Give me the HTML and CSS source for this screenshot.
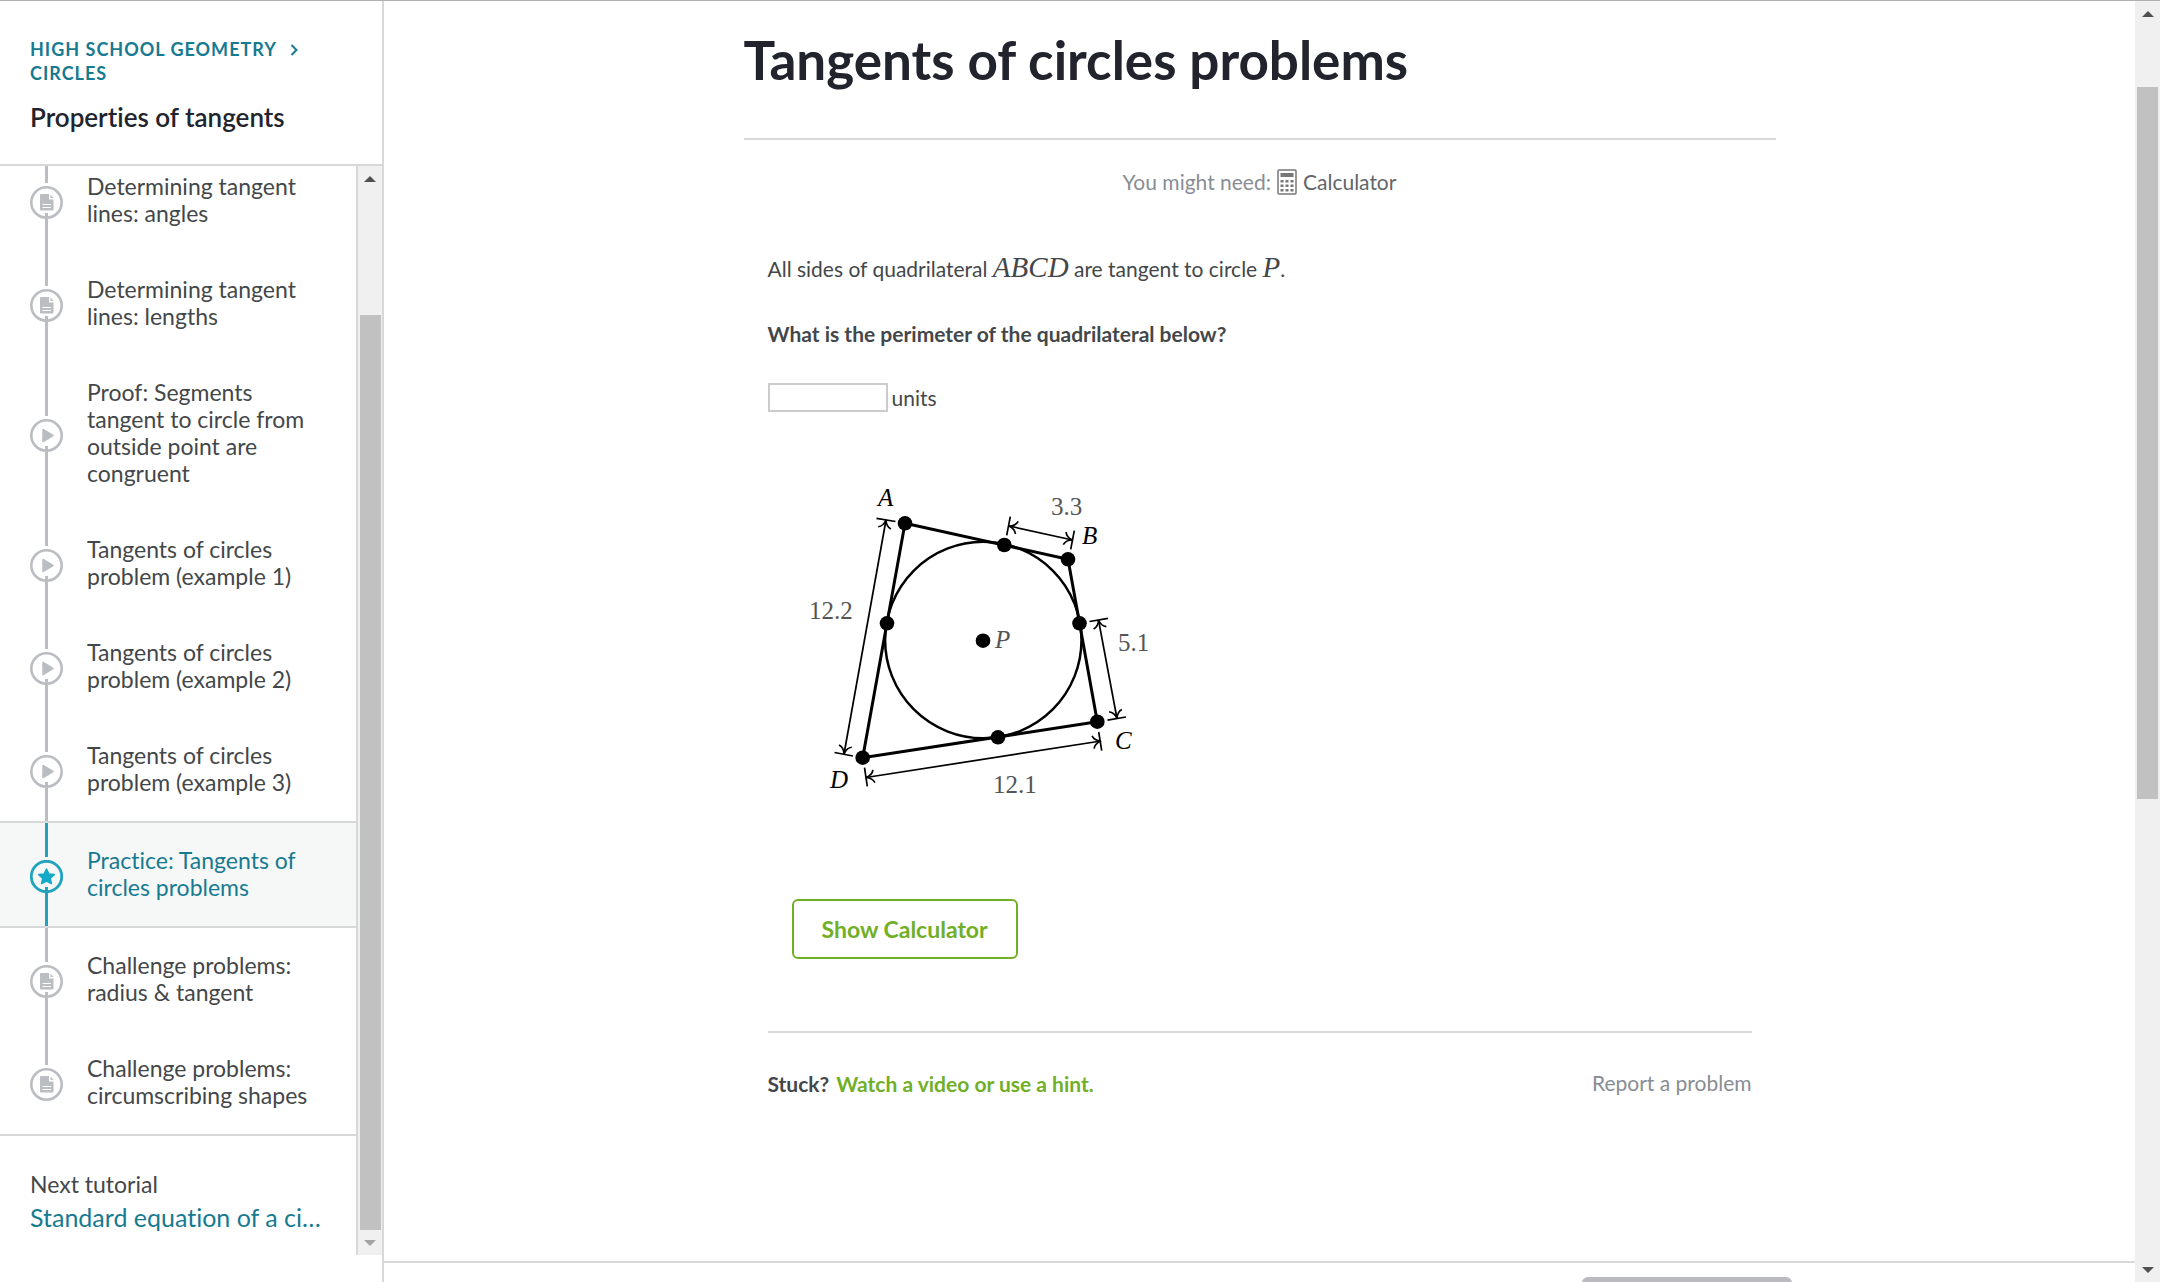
FILE: index.html
```html
<!DOCTYPE html>
<html lang="en">
<head>
    <meta charset="UTF-8">
    <meta name="viewport" content="width=device-width, initial-scale=1.0">
    <title>Tangents of circles problems</title>
    <link rel="stylesheet" href="styles.css">
</head>
<body>
    <!-- Shared icons -->
    <svg class="sprite" width="0" height="0" aria-hidden="true">
        <symbol id="icon-article" viewBox="0 0 33 33">
            <circle cx="16.500" cy="16.500" r="15.200" fill="none" stroke="currentColor" stroke-width="2.600"/>
            <path d="M11 8h8v5.500h4.500v10a1 1 0 0 1-1 1H11a1 1 0 0 1-1-1V9a1 1 0 0 1 1-1z" fill="currentColor"/>
            <path d="M20.500 8.500l3 3.500h-3z" fill="currentColor"/>
            <path d="M12.500 18.500h8.500M12.500 21.500h8.500" stroke="#fff" stroke-width="1.200"/>
            <path d="M15 27h3v6h-3z" fill="currentColor"/>
        </symbol>
        <symbol id="icon-article-end" viewBox="0 0 33 33">
            <circle cx="16.500" cy="16.500" r="15.200" fill="none" stroke="currentColor" stroke-width="2.600"/>
            <path d="M11 8h8v5.500h4.500v10a1 1 0 0 1-1 1H11a1 1 0 0 1-1-1V9a1 1 0 0 1 1-1z" fill="currentColor"/>
            <path d="M20.500 8.500l3 3.500h-3z" fill="currentColor"/>
            <path d="M12.500 18.500h8.500M12.500 21.500h8.500" stroke="#fff" stroke-width="1.200"/>
        </symbol>
        <symbol id="icon-video" viewBox="0 0 33 33">
            <circle cx="16.500" cy="16.500" r="15.200" fill="none" stroke="currentColor" stroke-width="2.600"/>
            <path d="M13 10.500l10 6-10 6z" fill="currentColor" stroke="currentColor" stroke-width="1.500" stroke-linejoin="round"/>
            <path d="M15 27h3v6h-3z" fill="currentColor"/>
        </symbol>
        <symbol id="icon-star" viewBox="0 0 33 33">
            <circle cx="16.500" cy="16.500" r="15.200" fill="none" stroke="currentColor" stroke-width="2.800"/>
            <path d="M16.500 9l2.400 5 5.400.600-4 3.700 1.100 5.400-4.900-2.700-4.900 2.700 1.100-5.400-4-3.700 5.400-.600z" fill="#14aac8" stroke="#14aac8" stroke-width="1.500" stroke-linejoin="round"/>
            <path d="M15 27h3v6h-3z" fill="currentColor"/>
        </symbol>
    </svg>

    <div class="page">
        <aside class="sidebar">
            <div class="sidebar-header">
                <nav class="breadcrumbs">
                    <a href="#">High school geometry</a>
                    <svg class="chevron" viewBox="0 0 8 12" aria-hidden="true"><path d="M1.500 1l5 5-5 5"/></svg>
                    <a href="#">Circles</a>
                </nav>
                <h2>Properties of tangents</h2>
            </div>

            <div class="sidebar-scroll">
                <div class="sidebar-content">
                    <ul class="lessons">
                        <li><a class="lesson" href="#">
                            <span class="marker"><svg><use href="#icon-article"/></svg></span>
                            <span class="lesson-title">Determining tangent lines: angles</span>
                        </a></li>
                        <li><a class="lesson" href="#">
                            <span class="marker"><svg><use href="#icon-article"/></svg></span>
                            <span class="lesson-title">Determining tangent lines: lengths</span>
                        </a></li>
                        <li><a class="lesson" href="#">
                            <span class="marker"><svg><use href="#icon-video"/></svg></span>
                            <span class="lesson-title">Proof: Segments tangent to circle from outside point are congruent</span>
                        </a></li>
                        <li><a class="lesson" href="#">
                            <span class="marker"><svg><use href="#icon-video"/></svg></span>
                            <span class="lesson-title">Tangents of circles problem (example 1)</span>
                        </a></li>
                        <li><a class="lesson" href="#">
                            <span class="marker"><svg><use href="#icon-video"/></svg></span>
                            <span class="lesson-title">Tangents of circles problem (example 2)</span>
                        </a></li>
                        <li><a class="lesson" href="#">
                            <span class="marker"><svg><use href="#icon-video"/></svg></span>
                            <span class="lesson-title">Tangents of circles problem (example 3)</span>
                        </a></li>
                        <li><a class="lesson active" href="#" aria-current="page">
                            <span class="marker"><svg><use href="#icon-star"/></svg></span>
                            <span class="lesson-title">Practice: Tangents of circles problems</span>
                        </a></li>
                        <li><a class="lesson" href="#">
                            <span class="marker"><svg><use href="#icon-article"/></svg></span>
                            <span class="lesson-title">Challenge problems: radius &amp; tangent</span>
                        </a></li>
                        <li><a class="lesson last" href="#">
                            <span class="marker"><svg><use href="#icon-article-end"/></svg></span>
                            <span class="lesson-title">Challenge problems: circumscribing shapes</span>
                        </a></li>
                    </ul>
                    <div class="next-tutorial">
                        <div>Next tutorial</div>
                        <a href="#">Standard equation of a ci…</a>
                    </div>
                </div>
                <div class="scrollbar sidebar-scrollbar" aria-hidden="true">
                    <span class="arrow arrow-up"></span>
                    <span class="track-before"></span>
                    <span class="thumb"></span>
                    <span class="arrow arrow-down muted"></span>
                </div>
            </div>
        </aside>

        <main class="main">
            <div class="exercise">
                <h1>Tangents of circles problems</h1>

                <div class="tools">
                    <span>You might need:</span>
                    <svg class="calculator-icon" viewBox="0 0 20 26" aria-hidden="true">
                        <rect x="1" y="1" width="18" height="24" rx="1" fill="none" stroke="currentColor" stroke-width="1.500"/>
                        <path d="M3.500 4h13v4h-13zM3.500 11h3v2.500h-3zM8.500 11h3v2.500h-3zM13.500 11h3v2.500h-3zM3.500 15.500h3V18h-3zM8.500 15.500h3V18h-3zM13.500 15.500h3V18h-3zM3.500 20h3v2.500h-3zM8.500 20h3v2.500h-3zM13.500 20h3v2.500h-3z" fill="currentColor"/>
                    </svg>
                    <span class="tool-name">Calculator</span>
                </div>

                <div class="problem">
                    <p>All sides of quadrilateral <i class="math">ABCD</i> are tangent to circle <i class="math">P</i>.</p>
                    <p class="question"><label for="answer">What is the perimeter of the quadrilateral below?</label></p>
                    <div class="answer">
                        <input type="text" id="answer">
                        <span>units</span>
                    </div>

                    <svg class="figure" viewBox="-12 0 412 340" role="img" aria-label="Quadrilateral ABCD tangent to circle P">
                        <defs>
                            <marker id="tip" viewBox="-9 -8 10 16" markerWidth="10" markerHeight="16" refX="0" refY="0" orient="auto-start-reverse" markerUnits="userSpaceOnUse">
                                <path d="M-8 -6.500C-7 -3-3-.700 0 0C-3 .700-7 3-8 6.500" fill="none" stroke="#000" stroke-width="1.700"/>
                            </marker>
                        </defs>
                        <circle class="shape" cx="203.300" cy="170" r="98.200"/>
                        <path class="side" d="M125 53.300L288 89.300L317.300 251.700L82.700 287.700Z"/>

                        <!-- Measured lengths -->
                        <g class="measure">
                            <path class="arrows" d="M106 50L64 284"/>
                            <path d="M96.500 48.300L115.500 51.500M54.500 282.500L73 286"/>
                            <path class="arrows" d="M229 56L292.500 70"/>
                            <path d="M230.300 46.700L226.700 65.300M294.300 60.700L290.700 79.300"/>
                            <path class="arrows" d="M318.500 150L337 248.500"/>
                            <path d="M309.500 151.500L328 148.300M327.500 250.200L346 247"/>
                            <path class="arrows" d="M86 307.500L321 271"/>
                            <path d="M84.500 297.700L87.300 316.300M318.700 262L321.700 280.700"/>
                        </g>

                        <g>
                            <circle cx="125" cy="53.300" r="7.300"/>
                            <circle cx="224.300" cy="75" r="7.300"/>
                            <circle cx="288" cy="89.300" r="7.300"/>
                            <circle cx="299.500" cy="153.300" r="7.300"/>
                            <circle cx="317.300" cy="251.700" r="7.300"/>
                            <circle cx="218" cy="267.300" r="7.300"/>
                            <circle cx="82.700" cy="287.700" r="7.300"/>
                            <circle cx="107" cy="153.300" r="7.300"/>
                            <circle cx="203" cy="170.700" r="7.300"/>
                        </g>

                        <g class="vertex">
                            <text x="98" y="36">A</text>
                            <text x="302" y="74">B</text>
                            <text x="335" y="279">C</text>
                            <text x="50" y="318">D</text>
                            <text class="center" x="215" y="178">P</text>
                        </g>
                        <g class="length">
                            <text x="29" y="149">12.2</text>
                            <text x="271" y="45">3.3</text>
                            <text x="338" y="181">5.1</text>
                            <text x="213" y="323">12.1</text>
                        </g>
                    </svg>

                    <button type="button" class="calculator-btn">Show Calculator</button>

                    <div class="help">
                        <div class="stuck">Stuck? <a href="#">Watch a video or use a hint.</a></div>
                        <button type="button" class="report-btn">Report a problem</button>
                    </div>
                </div>
            </div>

            <div class="action-bar">
                <button type="button" class="check-btn" aria-label="Check answer" disabled></button>
            </div>
        </main>

        <div class="scrollbar page-scrollbar" aria-hidden="true">
            <span class="arrow arrow-up"></span>
            <span class="track-before"></span>
            <span class="thumb"></span>
            <span class="track-after"></span>
            <span class="arrow arrow-down"></span>
        </div>
    </div>
</body>
</html>
```
FILE: styles.css
```css
* {
    box-sizing: border-box;
}

body {
    margin: 0;
    color: #444749;
    background-color: #ffffff;
    font-family: Lato, sans-serif;
    font-size: 21px;
    font-variant-ligatures: none;
    line-height: 28px;
}

a {
    color: inherit;
    text-decoration: none;
}

button {
    font-family: inherit;
    cursor: pointer;
}

.sprite {
    position: absolute;
}

.page {
    display: grid;
    grid-template-columns: 384px 1fr 25px;
    height: 100vh;
    overflow: hidden;
    border-top: 1px solid #b0b0b0;
}

/* Sidebar */
.sidebar {
    display: flex;
    flex-direction: column;
    min-height: 0;
    padding-bottom: 27px;
    border-right: 2px solid #d6d8da;
}

.sidebar-header {
    flex: none;
    padding: 36px 30px 31px;
    border-bottom: 2px solid #d6d8da;
}

.breadcrumbs {
    color: #167a90;
    font-size: 18px;
    font-weight: bold;
    line-height: 24px;
    letter-spacing: 1px;
    text-transform: uppercase;
}

.chevron {
    width: 8px;
    height: 12px;
    margin: 0 8px;
    fill: none;
    stroke: currentColor;
    stroke-width: 2;
}

.sidebar-header h2 {
    margin: 16px 0 0;
    color: #21242c;
    font-size: 26px;
    font-weight: 600;
    line-height: 32px;
}

.sidebar-scroll {
    display: flex;
    flex: 1;
    min-height: 0;
}

.sidebar-content {
    flex: 1;
    min-width: 0;
    overflow: hidden;
}

.lessons {
    margin: -17px 0 0;
    padding: 0;
    list-style: none;
    border-bottom: 2px solid #d6d8da;
}

.lesson {
    display: flex;
    gap: 24px;
    padding: 0 30px;
    font-size: 23px;
    line-height: 27px;
}

.lesson-title {
    padding: 24px 0 25px;
}

.marker {
    display: flex;
    flex: none;
    flex-direction: column;
    align-items: center;
    width: 33px;
    color: #babec2;
}

.marker svg {
    flex: none;
    width: 33px;
    height: 33px;
}

.marker::before,
.marker::after {
    content: "";
    flex: 1;
    width: 3px;
    background-color: currentColor;
}

.marker::before {
    margin-bottom: 3px;
}

.last .marker::after {
    background-color: transparent;
}

.active {
    color: #167a90;
    background-color: #f6f8f8;
    border-top: 2px solid #d6d8da;
    border-bottom: 2px solid #d6d8da;
}

.active .marker {
    color: #22a3bd;
}

.next-tutorial {
    padding: 32px 30px;
    font-size: 23px;
    line-height: 32px;
}

.next-tutorial a {
    display: block;
    color: #167a90;
    font-size: 25px;
    line-height: 34px;
    white-space: nowrap;
}

/* Scrollbars */
.scrollbar {
    display: flex;
    flex: none;
    flex-direction: column;
    align-items: center;
    width: 25px;
    background-color: #f0f0f0;
}

.sidebar-scrollbar {
    width: 26px;
    border-left: 2px solid #d6d8da;
}

.arrow {
    display: flex;
    align-items: center;
    justify-content: center;
    height: 25px;
}

.arrow::before {
    content: "";
    border: 6px solid transparent;
}

.arrow-up::before {
    margin-bottom: 6px;
    border-bottom-color: #505050;
}

.arrow-down::before {
    margin-top: 6px;
    border-top-color: #505050;
}

.arrow-down.muted::before {
    border-top-color: #a3a3a3;
}

.thumb {
    width: 21px;
    background-color: #c1c1c1;
}

.sidebar-scrollbar .track-before {
    flex: 124;
}

.sidebar-scrollbar .thumb {
    flex: 915;
}

.page-scrollbar .track-before {
    flex: 61;
}

.page-scrollbar .thumb {
    flex: 712;
}

.page-scrollbar .track-after {
    flex: 458;
}

/* Exercise */
.main {
    display: flex;
    flex-direction: column;
    min-width: 0;
    min-height: 0;
}

.exercise {
    flex: 1;
    width: 100%;
    max-width: 1032px;
    min-height: 0;
    margin: 0 auto;
}

.exercise h1 {
    margin: 0;
    padding: 27px 0 46px;
    color: #21242c;
    font-size: 53px;
    font-weight: bold;
    line-height: 64px;
    border-bottom: 2px solid #d6d8da;
}

.tools {
    display: flex;
    align-items: center;
    justify-content: center;
    gap: 6px;
    padding-top: 28px;
    color: #888d93;
}

.calculator-icon {
    width: 20px;
    height: 26px;
    color: #777777;
}

.tool-name {
    color: #626569;
}

.problem {
    padding: 57px 24px 0;
}

.problem p {
    margin: 0 0 33px;
    line-height: 32px;
}

.math {
    font-family: "Liberation Serif", serif;
    font-size: 29px;
    line-height: 28px;
}

.question {
    font-weight: bold;
}

.answer {
    display: flex;
    align-items: center;
    gap: 4px;
}

.answer input {
    width: 120px;
    height: 29px;
    padding: 0 6px;
    font: inherit;
    border: 2px solid #cccccc;
}

.figure {
    display: block;
    width: 412px;
    height: 340px;
    margin-top: 58px;
}

.shape,
.side {
    fill: none;
    stroke: #000000;
    stroke-width: 2.5;
}

.side {
    stroke-width: 3;
}

.measure {
    fill: none;
    stroke: #000000;
    stroke-width: 1.7;
}

.arrows {
    marker-start: url(#tip);
    marker-end: url(#tip);
}

.vertex,
.length {
    font-family: "Liberation Serif", serif;
    font-size: 25px;
}

.vertex {
    font-style: italic;
}

.length,
.center {
    fill: #555555;
}

.calculator-btn {
    display: block;
    margin: 89px 24px 72px;
    padding: 14px 28px;
    color: #71af26;
    font-size: 23px;
    font-weight: bold;
    line-height: 28px;
    background-color: transparent;
    border: 2px solid #71af26;
    border-radius: 6px;
}

.help {
    display: flex;
    align-items: flex-start;
    justify-content: space-between;
    padding-top: 36px;
    border-top: 2px solid #d6d8da;
}

.stuck {
    font-weight: bold;
    line-height: 30px;
}

.stuck a {
    margin-left: 2px;
    color: #71af26;
}

.report-btn {
    padding: 0;
    color: #888d93;
    font-size: 21px;
    line-height: 28px;
    background: none;
    border: none;
}

/* Bottom bar */
.action-bar {
    display: flex;
    flex: none;
    align-items: flex-start;
    justify-content: flex-end;
    height: 21px;
    padding: 14px 343px 0 0;
    overflow: hidden;
    border-top: 2px solid #d6d8da;
}

.check-btn {
    flex: none;
    width: 210px;
    height: 60px;
    background-color: #babbc0;
    border: none;
    border-radius: 6px;
}
```
